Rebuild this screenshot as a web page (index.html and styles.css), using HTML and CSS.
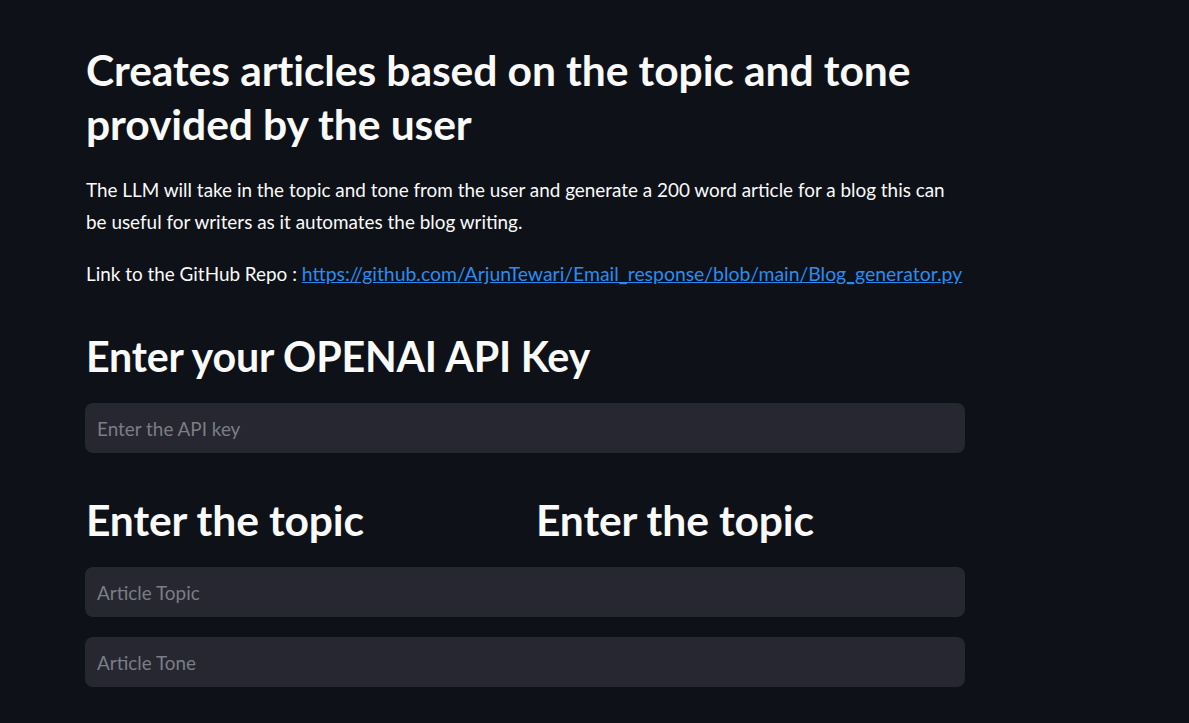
FILE: index.html
```html
<!DOCTYPE html>
<html>
<head>
<meta charset="utf-8">
<link rel="stylesheet" href="styles.css">
</head>
<body>
<main class="main">
  <h1 class="title">Creates articles based on the topic and tone provided by the user</h1>
  <p class="text">The LLM will take in the topic and tone from the user and generate a 200 word article for a blog this can be useful for writers as it automates the blog writing.</p>
  <p class="text">Link to the GitHub Repo : <a class="link" href="#">https://github.com/ArjunTewari/Email_response/blob/main/Blog_generator.py</a></p>
  <h2 class="header">Enter your OPENAI API Key</h2>
  <div class="field"><input class="input" type="text" placeholder="Enter the API key"></div>
  <div class="columns">
    <div class="column"><h2 class="header header-col">Enter the topic</h2></div>
    <div class="column"><h2 class="header header-col">Enter the topic</h2></div>
  </div>
  <div class="field"><input class="input" type="text" placeholder="Article Topic"></div>
  <div class="field"><input class="input" type="text" placeholder="Article Tone"></div>
</main>
</body>
</html>
```

FILE: styles.css
```css
html, body {
  margin: 0;
  padding: 0;
  background: #0e1117;
  height: 100%;
  overflow: hidden;
}
body {
  color: #fafafa;
  font-family: Lato, "Noto Sans", sans-serif;
}
.main {
  width: 880px;
  margin-left: 85px;
  padding-top: 43px;
  display: flex;
  flex-direction: column;
}
.title {
  font-size: 42.6px;
  font-weight: 700;
  line-height: 54px;
  margin: 0 0 23px 1px;
  letter-spacing: -0.1px;
}
.text {
  font-size: 18.9px;
  line-height: 32px;
  margin: 0 0 20px 1px;
  white-space: nowrap;
}
.text:first-of-type {
  white-space: normal;
}
.link {
  color: #2b8cf0;
  text-decoration: underline;
  font-size: 19.4px;
}
.header {
  font-size: 41.2px;
  font-weight: 700;
  line-height: 50px;
  margin: 21px 0 22px 1px;
  letter-spacing: -0.2px;
}
.field {
  margin-bottom: 20px;
}
.input {
  box-sizing: border-box;
  width: 880px;
  height: 50px;
  border: none;
  outline: none;
  border-radius: 8px;
  background: #262730;
  color: #fafafa;
  font-family: inherit;
  font-size: 18.9px;
  padding: 0 12px;
}
.input::placeholder {
  color: #7b7d87;
}
.columns {
  display: flex;
  gap: 20px;
  margin-top: 22px;
}
.column {
  flex: 1;
}
.header-col {
  font-size: 42.6px;
  margin: 0 0 22px 1px;
  letter-spacing: -0.15px;
}
```
